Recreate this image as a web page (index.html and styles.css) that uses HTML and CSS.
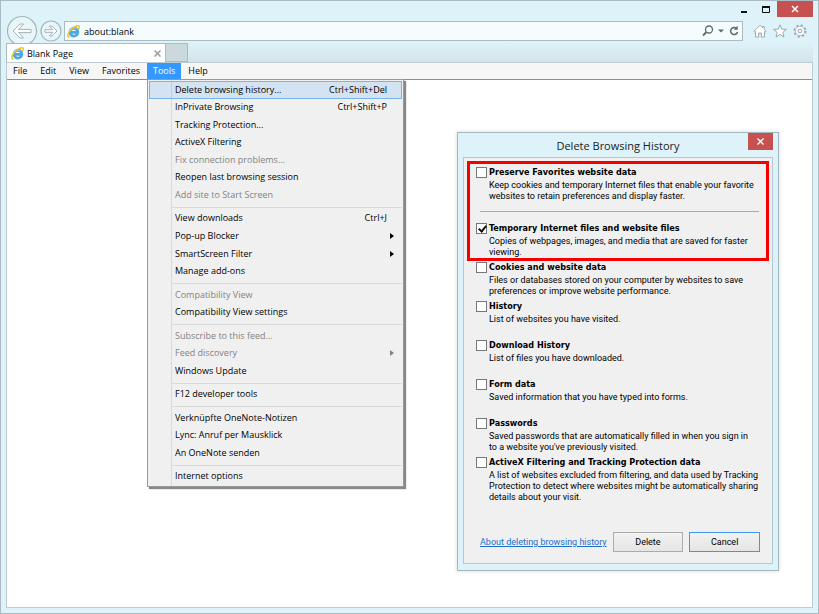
FILE: index.html
```html
<!DOCTYPE html>
<html lang="en">
<head>
    <meta charset="UTF-8">
    <meta name="viewport" content="width=device-width, initial-scale=1.0">
    <title>Blank Page</title>
    <link rel="stylesheet" href="styles.css">
</head>
<body>
    <svg class="sprite" aria-hidden="true">
        <symbol id="ie" viewBox="0 0 14 14">
            <path d="M11.400 9.300A4.200 4.200 0 1 1 11.700 7.900H4.600" fill="none" stroke="#4aa9de" stroke-width="3"/>
            <path d="M3.200 5.800A4.300 4.300 0 0 1 10 4.400" fill="none" stroke="#9ad9f6" stroke-width="1"/>
            <path d="M2.800 13.200C-.8 12.900 1 8 5 4.500 8.800 1.200 12.700 -.2 13.100 1.700 13.300 2.700 12.900 3.600 12.300 4.800" fill="none" stroke="#edc03c" stroke-width="1.600"/>
        </symbol>
    </svg>

    <div class="window">
        <div class="titlebar">
            <button class="win-btn" aria-label="Minimize"><svg width="8" height="12"><path d="M1 9h6" stroke="#111" stroke-width="2"/></svg></button>
            <button class="win-btn" aria-label="Maximize"><svg width="10" height="12"><path d="M1.500 3v6.500h7V3" fill="none" stroke="#111"/><path d="M1 4h8" stroke="#111" stroke-width="2"/></svg></button>
            <button class="win-close" aria-label="Close"><svg width="8" height="8"><path d="M1 1l6 6M7 1L1 7" stroke="#fff" stroke-width="1.500"/></svg></button>
        </div>

        <div class="navbar">
            <button class="nav-btn back" aria-label="Back">
                <svg viewBox="0 0 32 32"><circle cx="16" cy="16" r="14.500" fill="#e8f5f9" stroke="#a3b6bc" stroke-width="1.200"/><path d="M7 16l7-7h3.500l-5 5.400H25v3.200H12.500l5 5.400H14z" fill="#fff" stroke="#a3b3b9" stroke-linejoin="round"/></svg>
            </button>
            <button class="nav-btn forward" aria-label="Forward">
                <svg viewBox="0 0 22 22"><circle cx="11" cy="11" r="10" fill="#e8f5f9" stroke="#a3b6bc" stroke-width="1.200"/><path d="M17 11l-5-5H9.500l3.300 3.700H5v2.600h7.800L9.500 16H12z" fill="#fff" stroke="#a3b3b9" stroke-linejoin="round"/></svg>
            </button>
            <div class="address">
                <svg class="ie-icon"><use href="#ie"/></svg>
                <input type="text" value="about:blank" aria-label="Address">
                <button aria-label="Search"><svg width="12" height="12"><circle cx="7" cy="4.500" r="3.500" fill="none" stroke="#5d696d" stroke-width="1.300"/><path d="M4.500 7L1 10.500" stroke="#5d696d" stroke-width="1.800"/></svg></button>
                <button aria-label="Search options"><svg width="6" height="12"><path d="M0 4.500h6l-3 3z" fill="#5d696d"/></svg></button>
                <button aria-label="Refresh"><svg width="12" height="12"><path d="M8.500 3.500A3.500 3.500 0 1 0 9.500 7" fill="none" stroke="#5d696d" stroke-width="1.500"/><path d="M9.700 .8v4H5.700z" fill="#5d696d"/></svg></button>
            </div>
            <div class="tools">
                <button aria-label="Home"><svg width="14" height="14"><path d="M1 7.300L7 1.300l2.500 2.500V2.500h1.700v3L13 7.300l-.8.900-.7-.6V13H8.300V9H5.700v4H2.500V7.600l-.7.600z" fill="#fff" stroke="#99a9ae"/></svg></button>
                <button aria-label="Favorites"><svg width="14" height="14"><path d="M7 .8l1.700 4.300 4.700.3-3.600 3 1.200 4.700-4-2.600-4 2.600 1.200-4.700-3.600-3 4.700-.3z" fill="#fff" stroke="#99a9ae"/></svg></button>
                <button aria-label="Settings"><svg width="14" height="14"><circle cx="7" cy="7" r="5.500" fill="#fff" stroke="#99a9ae" stroke-width="2" stroke-dasharray="2.160 2.160"/><circle cx="7" cy="7" r="4.700" fill="#fff" stroke="#99a9ae" stroke-width=".8"/><circle cx="7" cy="7" r="2" fill="#e8f5f9" stroke="#99a9ae"/></svg></button>
            </div>
        </div>

        <div class="tabs">
            <div class="tab">
                <svg class="ie-icon"><use href="#ie"/></svg>
                <span class="tab-title">Blank Page</span>
                <button aria-label="Close tab"><svg width="7" height="7"><path d="M.5 .5l6 6M6.500 .5l-6 6" stroke="#999" stroke-width="1.500"/></svg></button>
            </div>
            <button class="new-tab" aria-label="New tab"></button>
        </div>

        <div class="content">
            <div class="menubar">
                <button>File</button>
                <button>Edit</button>
                <button>View</button>
                <button>Favorites</button>
                <div class="menu-holder">
                    <button class="open">Tools</button>
                    <div class="menu">
                        <button class="active"><span>Delete browsing history...</span><span>Ctrl+Shift+Del</span></button>
                        <button><span>InPrivate Browsing</span><span>Ctrl+Shift+P</span></button>
                        <button>Tracking Protection...</button>
                        <button>ActiveX Filtering</button>
                        <button disabled>Fix connection problems...</button>
                        <button>Reopen last browsing session</button>
                        <button disabled>Add site to Start Screen</button>
                        <hr>
                        <button><span>View downloads</span><span>Ctrl+J</span></button>
                        <button class="sub">Pop-up Blocker</button>
                        <button class="sub">SmartScreen Filter</button>
                        <button>Manage add-ons</button>
                        <hr>
                        <button disabled>Compatibility View</button>
                        <button>Compatibility View settings</button>
                        <hr>
                        <button disabled>Subscribe to this feed...</button>
                        <button class="sub" disabled>Feed discovery</button>
                        <button>Windows Update</button>
                        <hr>
                        <button>F12 developer tools</button>
                        <hr>
                        <button>Verknüpfte OneNote-Notizen</button>
                        <button>Lync: Anruf per Mausklick</button>
                        <button>An OneNote senden</button>
                        <hr>
                        <button>Internet options</button>
                    </div>
                </div>
                <button>Help</button>
            </div>
        </div>
    </div>

    <div class="dialog" role="dialog" aria-labelledby="dialogTitle">
        <div class="dialog-head">
            <h1 id="dialogTitle">Delete Browsing History</h1>
            <button class="dialog-close" aria-label="Close"><svg width="7" height="7"><path d="M.5 .5l6 6M6.500 .5l-6 6" stroke="#fff" stroke-width="1.400"/></svg></button>
        </div>
        <div class="dialog-body">
            <div class="highlight">
                <div class="option">
                    <input type="checkbox" id="favorites">
                    <label for="favorites">Preserve Favorites website data</label>
                    <p>Keep cookies and temporary Internet files that enable your favorite<br>websites to retain preferences and display faster.</p>
                </div>
                <hr>
                <div class="option">
                    <input type="checkbox" id="temp" checked>
                    <label for="temp">Temporary Internet files and website files</label>
                    <p>Copies of webpages, images, and media that are saved for faster<br>viewing.</p>
                </div>
            </div>
            <div class="options">
                <div class="option">
                    <input type="checkbox" id="cookies">
                    <label for="cookies">Cookies and website data</label>
                    <p>Files or databases stored on your computer by websites to save<br>preferences or improve website performance.</p>
                </div>
                <div class="option">
                    <input type="checkbox" id="history">
                    <label for="history">History</label>
                    <p>List of websites you have visited.</p>
                </div>
                <div class="option">
                    <input type="checkbox" id="downloads">
                    <label for="downloads">Download History</label>
                    <p>List of files you have downloaded.</p>
                </div>
                <div class="option">
                    <input type="checkbox" id="forms">
                    <label for="forms">Form data</label>
                    <p>Saved information that you have typed into forms.</p>
                </div>
                <div class="option">
                    <input type="checkbox" id="passwords">
                    <label for="passwords">Passwords</label>
                    <p>Saved passwords that are automatically filled in when you sign in<br>to a website you've previously visited.</p>
                </div>
                <div class="option">
                    <input type="checkbox" id="activex">
                    <label for="activex">ActiveX Filtering and Tracking Protection data</label>
                    <p>A list of websites excluded from filtering, and data used by Tracking<br>Protection to detect where websites might be automatically sharing<br>details about your visit.</p>
                </div>
            </div>
            <div class="dialog-foot">
                <a href="#">About deleting browsing history</a>
                <button>Delete</button>
                <button class="default">Cancel</button>
            </div>
        </div>
    </div>
</body>
</html>
```

FILE: styles.css
```css
* {
    margin: 0;
    padding: 0;
    box-sizing: border-box;
}

body {
    font-family: "Open Sans", sans-serif;
    font-size: 9px;
    color: #000;
    min-height: 100vh;
    position: relative;
}

button,
input {
    font: inherit;
    color: inherit;
    border: none;
    background: transparent;
}

button svg {
    display: block;
}

.sprite {
    display: none;
}

/* browser window */
.window {
    min-height: 100vh;
    display: flex;
    flex-direction: column;
    background: #def2f9;
    border: 1px solid #a9bcc4;
    padding: 0 5px 5px;
}

.titlebar {
    display: flex;
    justify-content: flex-end;
    align-items: flex-start;
    height: 16px;
}

.win-btn {
    width: 22px;
    height: 16px;
    display: flex;
    align-items: center;
    justify-content: center;
}

.win-close {
    width: 36px;
    height: 16px;
    display: flex;
    align-items: center;
    justify-content: center;
    background: #c75050;
}

.navbar {
    display: flex;
    align-items: center;
    height: 26px;
    padding-top: 2px;
}

.nav-btn svg {
    width: 100%;
    height: 100%;
}

.back {
    width: 32px;
    height: 32px;
    flex-shrink: 0;
}

.forward {
    width: 22px;
    height: 22px;
    margin: 0 2px;
    flex-shrink: 0;
}

.address {
    flex: 1;
    height: 20px;
    display: flex;
    align-items: center;
    gap: 4px;
    padding: 0 2px;
    background: #f5fcfe;
    border: 1px solid #a9bcc4;
}

.address input {
    flex: 1;
    min-width: 0;
    outline: none;
}

.ie-icon {
    width: 13px;
    height: 13px;
    flex-shrink: 0;
}

.tools {
    display: flex;
    gap: 6px;
    padding: 0 6px 0 10px;
}

.tabs {
    display: flex;
    height: 19px;
    position: relative;
    background: linear-gradient(#def2f9, #d3e4e9);
}

.tab {
    width: 160px;
    display: flex;
    align-items: center;
    gap: 3px;
    padding: 0 4px;
    background: #fff;
    border: 1px solid #a9bcc4;
    border-bottom: none;
}

.tab-title {
    flex: 1;
}

.new-tab {
    width: 22px;
    background: #cbd8dc;
    border: 1px solid #a9bcc4;
    border-left: none;
}

.content {
    flex: 1;
    background: #fff;
    border: 1px solid #bccbd0;
}

/* menus */
.menubar {
    display: flex;
    gap: 1px;
    height: 17px;
    background: #f6f6f6;
    border-bottom: 1px solid #8d8d8d;
}

.menubar > button,
.open {
    height: 16px;
    padding: 0 6px;
    line-height: 16px;
}

.open {
    display: block;
    background: #3399ff;
    color: #fff;
}

.menu-holder {
    position: relative;
}

.menu {
    position: absolute;
    z-index: 2;
    top: 16px;
    left: 0;
    width: 257px;
    min-height: 408px;
    display: flex;
    flex-direction: column;
    padding: 1px;
    background: linear-gradient(90deg, transparent 23px, #dadada 23px, #dadada 24px, transparent 24px) #f0f0f0;
    border: 1px solid #999;
    box-shadow: 2px 2px 1px #888;
}

.menu button {
    flex: 1 1 17px;
    display: flex;
    align-items: center;
    justify-content: space-between;
    padding: 0 14px 0 25px;
    border: 1px solid transparent;
    line-height: 14px;
    text-align: left;
    white-space: nowrap;
}

.menu button:disabled {
    color: #838383;
}

.menu .active {
    background: rgba(51, 153, 255, 0.15);
    border-color: #78b3ee;
}

.menu .sub {
    padding-right: 7px;
}

.sub::after {
    content: "";
    border: 3px solid transparent;
    border-left: 4px solid currentColor;
    border-right: none;
}

.menu hr {
    border: none;
    height: 1px;
    margin: 3px 0 2px 23px;
    background: #d9d9d9;
}

/* dialog */
.dialog {
    position: absolute;
    top: 132px;
    right: 40px;
    width: 322px;
    padding: 0 5px 6px;
    background: #def2f9;
    border: 1px solid #a3b9c0;
    box-shadow: 0 0 4px rgba(0, 0, 0, 0.15);
}

.dialog-head {
    display: flex;
    align-items: flex-start;
    height: 24px;
    padding-left: 25px;
}

.dialog-head h1 {
    flex: 1;
    font-size: 11px;
    font-weight: normal;
    line-height: 25px;
    text-align: center;
    color: #222;
}

.dialog-close {
    width: 25px;
    height: 17px;
    display: flex;
    align-items: center;
    justify-content: center;
    background: #c75050;
}

.dialog-body {
    padding: 3px;
    font-family: Roboto, sans-serif;
    background: #f0f0f0;
    border: 1px solid #b5c8cf;
}

.highlight {
    margin-bottom: -1px;
    padding: 1px 6px 0;
    border: 3px solid #f40000;
}

.highlight hr {
    border: none;
    height: 1px;
    margin: 7px 1px 9px 4px;
    background: #a9a9a9;
}

.options {
    padding: 0 9px;
}

.option {
    display: grid;
    grid-template-columns: 11px 1fr;
    column-gap: 2px;
    grid-template-rows: 14px;
    align-items: center;
    min-height: 39px;
    align-content: start;
}

.highlight .option:last-child {
    min-height: 37px;
}

.option input {
    appearance: none;
    width: 11px;
    height: 11px;
    position: relative;
    background: #fff;
    border: 1px solid #777;
}

.option input:checked::after {
    content: "";
    position: absolute;
    top: 0;
    left: 3px;
    width: 3px;
    height: 6px;
    border: solid #111;
    border-width: 0 2px 2px 0;
    transform: rotate(40deg);
}

.option label {
    font-family: "DejaVu Sans Condensed", "DejaVu Sans", sans-serif;
    font-weight: bold;
    line-height: 14px;
}

.option p {
    grid-column: 2;
    padding-top: 1px;
    line-height: 11px;
    white-space: nowrap;
}

.dialog-foot {
    display: flex;
    align-items: center;
    gap: 6px;
    padding: 29px 9px 8px 13px;
}

.dialog-foot a {
    flex: 1;
    color: #1a6fd0;
    white-space: nowrap;
}

.dialog-foot button {
    width: 71px;
    height: 20px;
    background: linear-gradient(#f2f2f2, #e5e5e5);
    border: 1px solid #acacac;
}

.dialog-foot .default {
    border-color: #3f97f0;
}
```
